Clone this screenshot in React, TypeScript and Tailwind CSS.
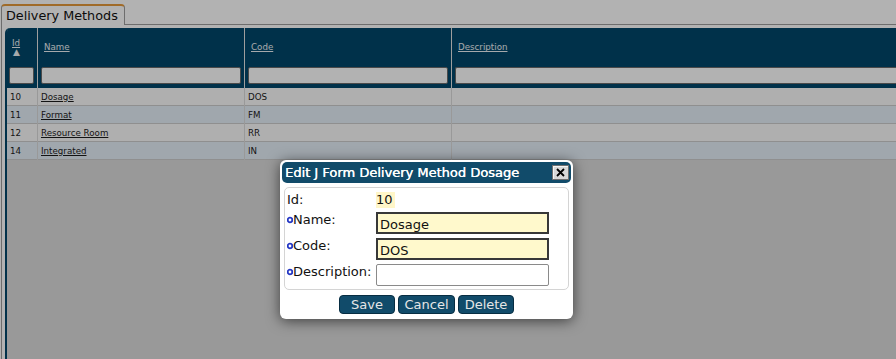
import React from 'react';

const rows = [
  { id: '10', name: 'Dosage', code: 'DOS' },
  { id: '11', name: 'Format', code: 'FM' },
  { id: '12', name: 'Resource Room', code: 'RR' },
  { id: '14', name: 'Integrated', code: 'IN' },
];

function RequiredMark() {
  return (
    <svg width="6" height="8" viewBox="0 0 6 8" className="shrink-0">
      <circle cx="3" cy="4" r="2.3" fill="#ffffff" stroke="#2437c4" strokeWidth="1.8" />
    </svg>
  );
}

function EditDialog() {
  return (
    <div className="absolute left-[280px] top-[160px] z-30 w-[293px] rounded-[6px] bg-white p-[2px] pb-[5px] shadow-[0_2px_14px_rgba(0,0,0,0.6)]">
      <div className="flex h-[21px] items-center rounded-[5px] bg-[#114b6a] pl-[3px] pr-[2px]">
        <span className="text-[13px] leading-none text-white [text-shadow:0.3px_0_0_#ffffff]">
          Edit J Form Delivery Method Dosage
        </span>
        <button className="ml-auto flex h-[15px] w-[17px] items-center justify-center border border-[#6f6f6f] bg-[#d8d8d8] shadow-[inset_1px_1px_0_#f4f4f4]">
          <svg width="9" height="9" viewBox="0 0 9 9">
            <path d="M1 1 L8 8 M8 1 L1 8" stroke="#000" strokeWidth="1.8" />
          </svg>
        </button>
      </div>

      <div className="mx-[2px] mt-[4px] rounded-[5px] border border-[#d4d4d4] pb-[3px] pl-[2px] pr-[2px] pt-[4px]">
        <div className="grid grid-cols-[89px_173px] gap-y-[4px] text-[13px] leading-[16px] text-[#111]">
          <div className="flex h-[16px] items-center">Id:</div>
          <div>
            <span className="inline-block bg-[#fff6c8] pr-[2px]">10</span>
          </div>

          <div className="flex h-[16px] items-center self-start">
            <RequiredMark />
            Name:
          </div>
          <input
            readOnly
            value="Dosage"
            className="h-[22px] w-full border-2 border-[#383838] bg-[#fff9cc] px-[2px] pt-[2px] text-[13px] text-[#111] outline-none"
          />

          <div className="flex h-[16px] items-center self-start">
            <RequiredMark />
            Code:
          </div>
          <input
            readOnly
            value="DOS"
            className="h-[22px] w-full border-2 border-[#383838] bg-[#fff9cc] px-[2px] pt-[2px] text-[13px] text-[#111] outline-none"
          />

          <div className="flex h-[16px] items-center self-start">
            <RequiredMark />
            Description:
          </div>
          <input
            readOnly
            value=""
            className="h-[22px] w-full rounded-[2px] border border-[#8a8a8a] bg-white px-[2px] text-[13px] outline-none"
          />
        </div>
      </div>

      <div className="mt-[5px] flex justify-center gap-[3px]">
        {[
          { label: 'Save', w: 'w-[56px]' },
          { label: 'Cancel', w: 'w-[57px]' },
          { label: 'Delete', w: 'w-[56px]' },
        ].map((b) => (
          <button
            key={b.label}
            className={`${b.w} h-[19px] rounded-[4px] border border-[#072d42] bg-[#114b6a] text-[13px] leading-none text-[#e6e6e6]`}
          >
            {b.label}
          </button>
        ))}
      </div>
    </div>
  );
}

export default function App() {
  return (
    <div className="relative h-[359px] w-full overflow-hidden bg-white pl-[1px] font-['DejaVu_Sans',Verdana,sans-serif]">
      <div className="flex h-[359px] flex-col pt-[4px]">
        {/* tab strip */}
        <div className="relative z-10 -mb-px flex">
          <div className="h-[21px] rounded-t-[4px] border-x border-t-2 border-x-[#9d9d9d] border-t-[#e69a3c] bg-white pl-[4px] pr-[6px] text-[12.8px] leading-[19px] text-[#111]">
            Delivery Methods
          </div>
        </div>

        {/* panel */}
        <div className="flex flex-1 flex-col border-l border-t border-[#9d9d9d] pl-[3px] pt-[3px]">
          <div className="flex flex-1 flex-col rounded-tl-[5px] border-l-2 border-[#00476a] bg-[#dbdbdb]">
            {/* header */}
            <div className="rounded-tl-[4px] bg-[#00476a] text-[8.7px] text-[#eef2f6]">
              <div className="grid h-[37px] grid-cols-[30px_207px_207px_1fr]">
                <div className="flex flex-col justify-center pl-[5px] pt-[3px] leading-[9px]">
                  <span className="underline">Id</span>
                  <span className="pl-[1px] text-[9px]">▲</span>
                </div>
                <div className="flex items-center border-l border-[#e2e2e2] pl-[6px] pt-[3px]">
                  <span className="underline">Name</span>
                </div>
                <div className="flex items-center border-l border-[#e2e2e2] pl-[6px] pt-[3px]">
                  <span className="underline">Code</span>
                </div>
                <div className="flex items-center border-l border-[#e2e2e2] pl-[6px] pt-[3px]">
                  <span className="underline">Description</span>
                </div>
              </div>
              <div className="grid h-[23px] grid-cols-[30px_207px_207px_1fr]">
                <div className="pl-[2px] pr-[3px] pt-[2px]">
                  <div className="h-[17px] rounded-[2px] border border-[#6a6a6a] bg-white" />
                </div>
                <div className="border-l border-[#e2e2e2] px-[3px] pt-[2px]">
                  <div className="h-[17px] rounded-[2px] border border-[#6a6a6a] bg-white" />
                </div>
                <div className="border-l border-[#e2e2e2] px-[3px] pt-[2px]">
                  <div className="h-[17px] rounded-[2px] border border-[#6a6a6a] bg-white" />
                </div>
                <div className="border-l border-[#e2e2e2] pl-[3px] pt-[2px]">
                  <div className="h-[17px] rounded-l-[2px] border border-r-0 border-[#6a6a6a] bg-white" />
                </div>
              </div>
            </div>

            {/* rows */}
            {rows.map((r, i) => (
              <div
                key={r.id}
                className={`grid h-[18px] grid-cols-[30px_207px_207px_1fr] border-b border-[#cdcdcd] text-[8.7px] leading-[18px] text-[#1c1c1c] ${
                  i % 2 === 0 ? 'bg-[#fbfbfb]' : 'bg-[#e6f0f8]'
                }`}
              >
                <div className="pl-[3px]">{r.id}</div>
                <div className="border-l border-[#dcdcdc] pl-[3px]">
                  <span className="underline">{r.name}</span>
                </div>
                <div className="border-l border-[#dcdcdc] pl-[3px]">{r.code}</div>
                <div className="border-l border-[#dcdcdc]" />
              </div>
            ))}
          </div>
        </div>
      </div>

      {/* modal overlay */}
      <div className="absolute inset-0 z-20 bg-[rgba(0,0,0,0.3)]" />
      <EditDialog />
    </div>
  );
}
